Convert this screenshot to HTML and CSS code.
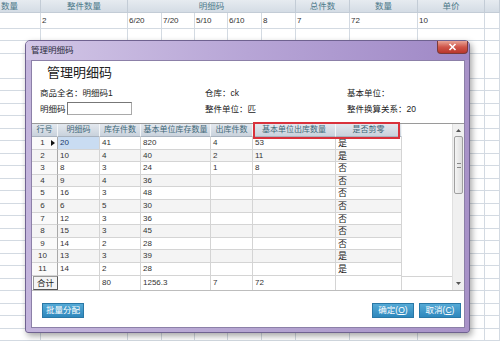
FILE: index.html
```html
<!DOCTYPE html>
<html>
<head>
<meta charset="utf-8">
<link rel="stylesheet" href="styles.css">
</head>
<body>
<div class="sheet">
  <div class="srow shead">
    <div class="c cut">数量</div><div class="c">整件数量</div><div class="c span5">明细码</div><div class="c">总件数</div><div class="c">数量</div><div class="c">单价</div><div class="c"></div>
  </div>
  <div class="srow sdata">
    <div class="c"></div><div class="c">2</div><div class="c">6/20</div><div class="c">7/20</div><div class="c">5/10</div><div class="c">6/10</div><div class="c">8</div><div class="c">7</div><div class="c">72</div><div class="c">10</div><div class="c"></div>
  </div>
  <div class="srow sfill">
    <div class="c"></div><div class="c"></div><div class="c"></div><div class="c"></div><div class="c"></div><div class="c"></div><div class="c"></div><div class="c"></div><div class="c"></div><div class="c"></div><div class="c"></div>
  </div>
</div>

<div class="dlg">
  <div class="titlebar">
    <span class="ttl">管理明细码</span>
    <div class="close"><svg width="9" height="8" viewBox="0 0 9 8"><path d="M1.5 1 L7.5 7 M7.5 1 L1.5 7" stroke="#fff" stroke-width="1.6" fill="none"/></svg></div>
  </div>
  <div class="body">
    <h1 class="heading">管理明细码</h1>
    <div class="info">
      <div>商品全名：明细码1</div><div>仓库：ck</div><div>基本单位：</div>
      <div class="fld">明细码<span class="input"></span></div><div>整件单位：匹</div><div>整件换算关系：20</div>
    </div>
    <div class="tablewrap">
      <div class="grid">
        <div class="h">行号</div><div class="h">明细码</div><div class="h">库存件数</div><div class="h">基本单位库存数量</div><div class="h">出库件数</div><div class="h">基本单位出库数量</div><div class="h">是否剪零</div><div class="e"></div>

        <div class="rn">1<span class="arrow"></span></div><div class="d sel">20</div><div class="d">41</div><div class="d">820</div><div class="d">4</div><div class="d">53</div><div class="d yn">是</div><div class="e"></div>
        <div class="rn alt">2</div><div class="d alt">10</div><div class="d alt">4</div><div class="d alt">40</div><div class="d alt">2</div><div class="d alt">11</div><div class="d yn alt">是</div><div class="e"></div>
        <div class="rn">3</div><div class="d">8</div><div class="d">3</div><div class="d">24</div><div class="d">1</div><div class="d">8</div><div class="d yn">否</div><div class="e"></div>
        <div class="rn alt">4</div><div class="d alt">9</div><div class="d alt">4</div><div class="d alt">36</div><div class="d alt"></div><div class="d alt"></div><div class="d yn alt">否</div><div class="e"></div>
        <div class="rn">5</div><div class="d">16</div><div class="d">3</div><div class="d">48</div><div class="d"></div><div class="d"></div><div class="d yn">否</div><div class="e"></div>
        <div class="rn alt">6</div><div class="d alt">6</div><div class="d alt">5</div><div class="d alt">30</div><div class="d alt"></div><div class="d alt"></div><div class="d yn alt">否</div><div class="e"></div>
        <div class="rn">7</div><div class="d">12</div><div class="d">3</div><div class="d">36</div><div class="d"></div><div class="d"></div><div class="d yn">否</div><div class="e"></div>
        <div class="rn alt">8</div><div class="d alt">15</div><div class="d alt">3</div><div class="d alt">45</div><div class="d alt"></div><div class="d alt"></div><div class="d yn alt">否</div><div class="e"></div>
        <div class="rn">9</div><div class="d">14</div><div class="d">2</div><div class="d">28</div><div class="d"></div><div class="d"></div><div class="d yn">否</div><div class="e"></div>
        <div class="rn alt">10</div><div class="d alt">13</div><div class="d alt">3</div><div class="d alt">39</div><div class="d alt"></div><div class="d alt"></div><div class="d yn alt">是</div><div class="e"></div>
        <div class="rn">11</div><div class="d">14</div><div class="d">2</div><div class="d">28</div><div class="d"></div><div class="d"></div><div class="d yn">是</div><div class="e"></div>

        <div class="tot"><span class="totbox">合计</span></div><div class="d t"></div><div class="d t">80</div><div class="d t">1256.3</div><div class="d t">7</div><div class="d t">72</div><div class="d t"></div><div class="e t"></div>
      </div>
      <div class="scroll">
        <div class="sbtn"><svg width="5" height="3" viewBox="0 0 5 3"><path d="M0 3 L2.5 0 L5 3 Z" fill="#555"/></svg></div>
        <div class="thumb"><span class="grip"></span></div>
        <div class="track"></div>
        <div class="sbtn"><svg width="5" height="3" viewBox="0 0 5 3"><path d="M0 0 L2.5 3 L5 0 Z" fill="#555"/></svg></div>
      </div>
      <div class="hl"></div>
    </div>
    <div class="footer">
      <button class="btn">批量分配</button>
      <div class="right">
        <button class="btn">确定(<u>O</u>)</button>
        <button class="btn">取消(<u>C</u>)</button>
      </div>
    </div>
  </div>
</div>
</body>
</html>
```

FILE: styles.css
```css
* { box-sizing: border-box; }
html, body { margin: 0; padding: 0; }
body {
  width: 500px;
  height: 341px;
  overflow: hidden;
  position: relative;
  background: #fff;
  font-family: "Liberation Sans", "Noto Sans CJK SC", sans-serif;
  font-size: 8.5px;
  color: #222;
}

/* background spreadsheet */
.sheet { display: flex; flex-direction: column; height: 341px; }
.srow {
  display: grid;
  grid-template-columns: 41px 87px 34px 33px 33px 34px 34px 54px 68px 67px 1fr;
}
.srow .c { border-right: 1px solid #d3dae2; border-bottom: 1px solid #d3dae2; white-space: nowrap; overflow: hidden; }
.shead { height: 13px; background: linear-gradient(#e6ebf0, #d3dbe4); }
.shead .c { text-align: center; color: #4d7a8a; line-height: 12px; font-size: 8.5px; border-color: #c3ccd6; }
.shead .cut { text-align: right; padding-right: 22px; }
.span5 { grid-column: span 5; }
.sdata { height: 16px; }
.sdata .c { padding-left: 1px; line-height: 15px; font-size: 8px; color: #333; }
.sfill {
  flex: 1;
  background: repeating-linear-gradient(to bottom, transparent 0, transparent 11.5px, #d3dae2 11.5px, #d3dae2 12.5px);
}
.sfill .c { border-bottom: none; }

/* dialog */
.dlg {
  position: absolute;
  left: 25px;
  top: 40px;
  width: 445px;
  height: 293px;
  border: 1px solid #6f6290;
  border-radius: 5px 5px 3px 3px;
  background: linear-gradient(to right, #c3b4dc, #b3a2d0 60%, #a892c8);
  box-shadow: 2px 3px 6px rgba(0,0,0,0.35);
  display: flex;
  flex-direction: column;
}
.titlebar {
  height: 19px;
  display: flex;
  align-items: flex-start;
  justify-content: space-between;
  padding-left: 5px;
  background: linear-gradient(to right, #d2c6e6, #b7a5d6 50%, #9f88c6);
  border-radius: 4px 4px 0 0;
}
.ttl { font-size: 8.5px; line-height: 14px; color: #2a2a3a; margin-top: 2px; }
.close {
  width: 31px;
  height: 13px;
  margin-right: 1px;
  background: linear-gradient(#e9a496, #d0564a 50%, #b9362c);
  border: 1px solid #7a3a3a;
  border-top: none;
  border-radius: 0 0 4px 4px;
  display: flex;
  align-items: center;
  justify-content: center;
}
.body {
  flex: 1;
  margin: 0 4px 4px 5px;
  background: #fff;
  border: 1px solid #8c80a8;
  display: flex;
  flex-direction: column;
}
.heading {
  margin: 3px 0 0 0;
  padding-left: 15px;
  height: 16px;
  font-size: 13px;
  font-weight: normal;
  line-height: 16px;
  color: #222;
  font-family: "Noto Sans CJK SC", sans-serif;
}
.info {
  margin-top: 4px;
  padding-left: 8px;
  display: grid;
  grid-template-columns: 165px 142px 1fr;
  grid-auto-rows: 16px;
  align-items: center;
  font-size: 8.5px;
}
.fld { display: flex; align-items: center; }
.input {
  width: 65px;
  height: 13px;
  margin-left: 1px;
  border: 1px solid #a9a9a9;
  border-top-color: #777;
  border-left-color: #777;
  background: #fff;
}

/* table */
.tablewrap {
  margin-top: 7px;
  position: relative;
  display: flex;
  border-top: 1px solid #9a9a9a;
  border-bottom: 1px solid #bdbdbd;
}
.grid {
  flex: 1;
  display: grid;
  grid-template-columns: 26px 42px 41px 70px 42px 83px 66px 1fr;
  grid-template-rows: 13px repeat(11, 12.6px) 14px;
}
.h {
  background: linear-gradient(#e3e8ee, #c9d2dc);
  border-right: 1px solid #f4f6f8;
  border-bottom: 1px solid #a9b3bf;
  text-align: center;
  font-size: 8px;
  line-height: 12px;
  color: #3e6878;
  white-space: nowrap;
  overflow: hidden;
}
.e { background: #fff; }
.e.t { border-top: 1px solid #d4d4d4; }
.rn {
  position: relative;
  background: #fafafa;
  border-right: 1px solid #a8a8a8;
  border-bottom: 1px solid #d4d4d4;
  text-align: center;
  font-size: 8px;
  line-height: 12px;
  padding-right: 4px;
  color: #333;
}
.arrow {
  position: absolute;
  right: 2px;
  top: 3px;
  width: 0; height: 0;
  border-top: 3.5px solid transparent;
  border-bottom: 3.5px solid transparent;
  border-left: 4px solid #111;
}
.d {
  border-right: 1px solid #d4d4d4;
  border-bottom: 1px solid #d4d4d4;
  padding-left: 2px;
  font-size: 8px;
  line-height: 12px;
  color: #333;
  white-space: nowrap;
  overflow: hidden;
}
.alt { background: #f4f4f4; }
.sel { background: #c9dcf2; color: #1a3a6a; }
.yn { font-family: "Noto Sans CJK SC", sans-serif; font-size: 9px; line-height: 12px; color: #222; }
.d.t { border-bottom: none; line-height: 14px; }
.tot { display: flex; }
.totbox {
  width: 27px;
  height: 14px;
  border: 1px solid #555;
  border-top-color: #999;
  border-left-color: #999;
  background: #f4f4f4;
  text-align: center;
  font-size: 8.5px;
  line-height: 12px;
  color: #222;
  margin-left: 1px;
}
.scroll {
  width: 12px;
  display: flex;
  flex-direction: column;
  background: #f0f0f0;
  border-left: 1px solid #e0e0e0;
}
.sbtn {
  height: 12px;
  display: flex;
  align-items: center;
  justify-content: center;
}
.thumb {
  height: 58px;
  margin: 0 1px;
  background: linear-gradient(to right, #f4f4f4, #dedede);
  border: 1px solid #a0a0a0;
  border-radius: 2px;
  display: flex;
  align-items: center;
  justify-content: center;
}
.grip { width: 4px; height: 5px; border-top: 1px solid #888; border-bottom: 1px solid #888; position: relative; }
.track { flex: 1; }
.hl {
  position: absolute;
  left: 221px;
  top: -2px;
  width: 147px;
  height: 17px;
  border: 2px solid #d9323c;
}

/* footer */
.footer {
  margin-top: 12px;
  padding: 0 3px 0 10px;
  display: flex;
  justify-content: space-between;
  align-items: flex-start;
}
.right { display: flex; gap: 5px; }
.btn {
  height: 15px;
  width: 42px;
  padding: 0;
  margin: 0;
  border: 1px solid #2a78a6;
  background: linear-gradient(#55aad6, #2f88bd);
  color: #fff;
  font-family: "Liberation Sans", "Noto Sans CJK SC", sans-serif;
  font-size: 8.5px;
  line-height: 13px;
  text-align: center;
}
.btn u { text-decoration: underline; }
```
